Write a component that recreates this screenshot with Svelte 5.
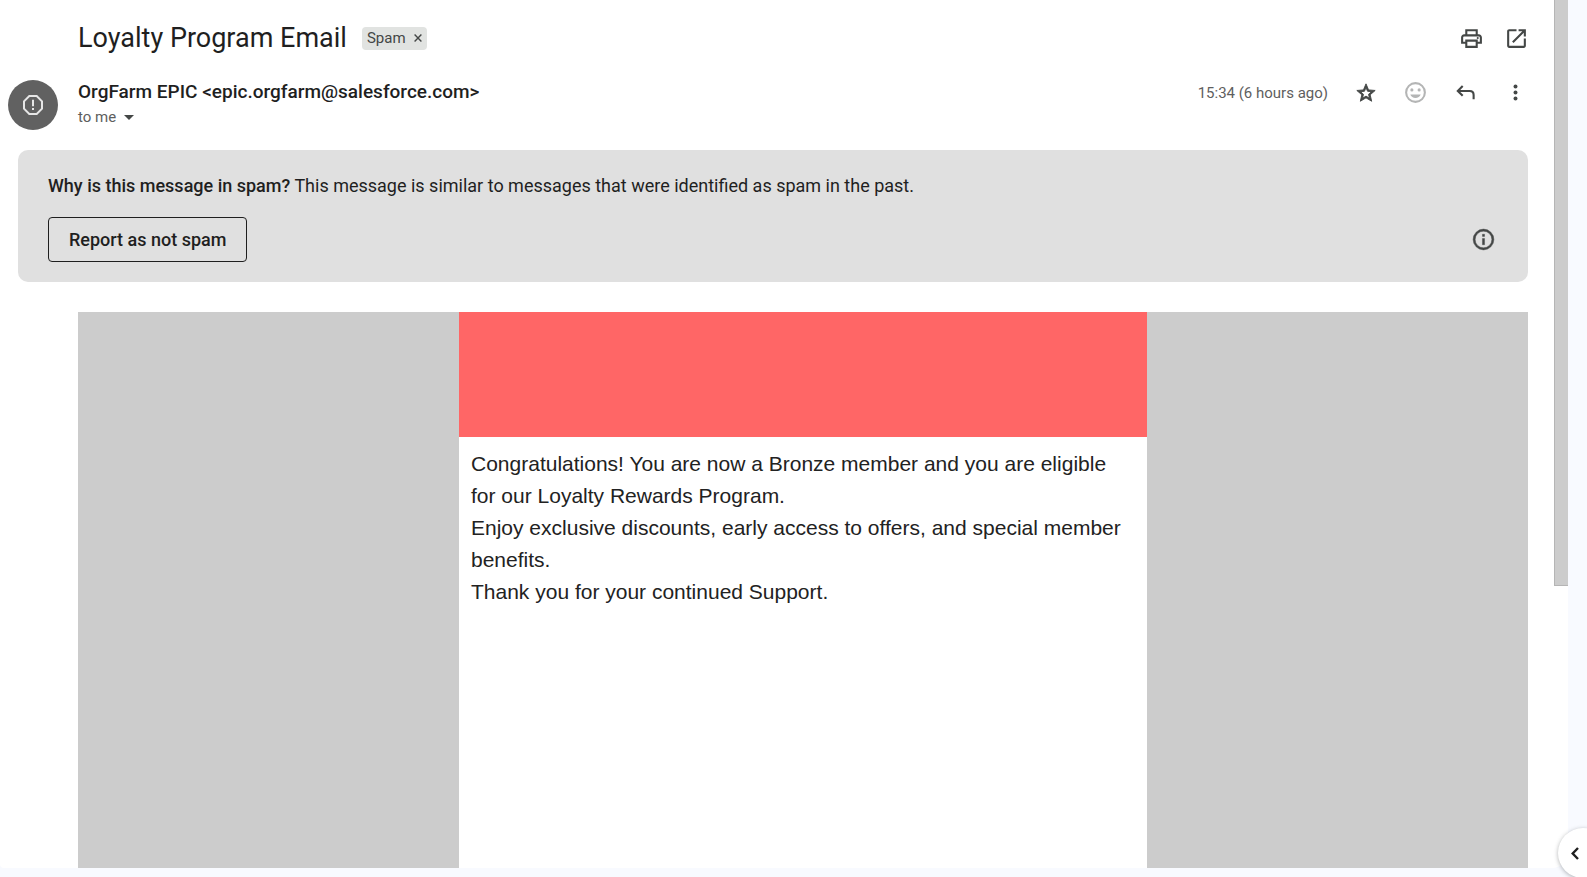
<script>
  const message = {
    subject: 'Loyalty Program Email',
    label: 'Spam',
    sender: 'OrgFarm EPIC',
    address: 'epic.orgfarm@salesforce.com',
    time: '15:34 (6 hours ago)',
    lines: [
      'Congratulations! You are now a Bronze member and you are eligible for our Loyalty Rewards Program.',
      'Enjoy exclusive discounts, early access to offers, and special member benefits.',
      'Thank you for your continued Support.'
    ]
  };
  let starred = $state(false);
  let labelled = $state(true);
</script>

<div class="page">
  <div class="sheet">
    <main class="thread">
      <header class="subject">
        <h1>{message.subject}</h1>
        {#if labelled}
          <span class="label">
            {message.label}
            <button aria-label="Remove label Spam" onclick={() => (labelled = false)}>
              <svg width="8" height="8" viewBox="0 0 8 8"><path d="M.6.6l6.800 6.800M7.400.6L.6 7.400" fill="none" stroke="#444746" stroke-width="1.4" /></svg>
            </button>
          </span>
        {/if}
        <div class="tools">
          <button class="icon" aria-label="Print all">
            <svg viewBox="0 0 24 24"><path d="M19 8h-1V3H6v5H5c-1.66 0-3 1.34-3 3v6h4v4h12v-4h4v-6c0-1.66-1.34-3-3-3zM8 5h8v3H8V5zm8 14H8v-4h8v4zm2-4v-2H6v2H4v-4c0-.55.45-1 1-1h14c.55 0 1 .45 1 1v4h-2z" /><circle cx="18" cy="11.5" r="1" /></svg>
          </button>
          <button class="icon" aria-label="In new window">
            <svg viewBox="0 0 24 24"><path d="M19 19H5V5h7V3H5c-1.11 0-2 .9-2 2v14c0 1.1.89 2 2 2h14c1.1 0 2-.9 2-2v-7h-2v7zM14 3v2h3.59l-9.83 9.83 1.41 1.41L19 6.41V10h2V3h-7z" /></svg>
          </button>
        </div>
      </header>

      <section class="sender">
        <div class="avatar">
          <svg width="20" height="20" viewBox="0 0 20 20"><path d="M6.3 1h7.4L19 6.3v7.4L13.7 19H6.3L1 13.7V6.3z" fill="none" stroke="#e6e6e6" stroke-width="2" /><path d="M9 4.8h2v6.4H9zM9 13h2v2H9z" fill="#e6e6e6" /></svg>
        </div>
        <div class="who">
          <h2>{message.sender} &lt;{message.address}&gt;</h2>
          <button class="to">to me
            <svg width="10" height="5" viewBox="0 0 10 5"><path d="M0 0h10L5 5z" fill="#444746" /></svg>
          </button>
        </div>
        <div class="actions">
          <time>{message.time}</time>
          <button class="icon star" aria-label="Star" aria-pressed={starred} onclick={() => (starred = !starred)}>
            <svg viewBox="0 0 24 24"><path d="M22 9.24l-7.19-.62L12 2 9.19 8.63 2 9.24l5.46 4.73L5.82 21 12 17.27 18.18 21l-1.63-7.03L22 9.24zM12 15.4l-3.76 2.27 1-4.28-3.32-2.88 4.38-.38L12 6.1l1.71 4.04 4.38.38-3.32 2.88 1 4.28L12 15.4z" /></svg>
          </button>
          <button class="icon faded" aria-label="Add reaction" disabled>
            <svg viewBox="0 0 24 24"><path d="M12 2a10 10 0 1 0 0 20 10 10 0 0 0 0-20zm0 18a8 8 0 1 1 0-16 8 8 0 0 1 0 16z" /><circle cx="8.5" cy="9.5" r="1.5" /><circle cx="15.5" cy="9.5" r="1.5" /><path d="M7 14h10c-.8 2-2.7 3.300-5 3.300S7.800 16 7 14z" /></svg>
          </button>
          <button class="icon" aria-label="Reply">
            <svg viewBox="0 0 24 24"><path d="M9.300 5.800L4.600 10.500L9.300 15.200M4.600 10.500H16C18.200 10.500 19.800 12.100 19.800 14.300V18.500" fill="none" stroke="#444746" stroke-width="2" /></svg>
          </button>
          <button class="icon" aria-label="More">
            <svg viewBox="0 0 24 24"><circle cx="12" cy="6.2" r="1.900" /><circle cx="12" cy="12" r="1.900" /><circle cx="12" cy="17.800" r="1.900" /></svg>
          </button>
        </div>
      </section>

      <section class="notice">
        <p><b>Why is this message in spam?</b> This message is similar to messages that were identified as spam in the past.</p>
        <div class="row">
          <button class="report">Report as not spam</button>
          <button class="icon info" aria-label="Learn more">
            <svg viewBox="0 0 24 24"><path d="M11 7h2v2h-2zm0 4h2v6h-2zm1-9a10 10 0 1 0 0 20 10 10 0 0 0 0-20zm0 18a8 8 0 1 1 0-16 8 8 0 0 1 0 16z" /></svg>
          </button>
        </div>
      </section>

      <article class="mail">
        <div class="letter">
          <div class="banner"></div>
          <div class="copy">
            {#each message.lines as line}
              <p>{line}</p>
            {/each}
          </div>
        </div>
      </article>
    </main>
    <div class="track"><div class="thumb"></div></div>
  </div>
  <button class="panel" aria-label="Show side panel">
    <svg width="8" height="13" viewBox="0 0 8 13"><path d="M7 1L1.700 6.500L7 12" fill="none" stroke="#1f1f1f" stroke-width="2.400" /></svg>
  </button>
</div>

<style>
  :global(body) {
    margin: 0;
    background: #f8faff;
  }
  .page {
    position: relative;
    box-sizing: border-box;
    height: 100vh;
    padding: 0 19px 9px 0;
    overflow: hidden;
    font-family: Roboto, sans-serif;
    color: #1f1f1f;
  }
  .sheet {
    display: flex;
    height: 100%;
    background: #fff;
    border-radius: 0 0 16px 4px;
    overflow: hidden;
  }
  .thread {
    flex: 1;
    min-width: 0;
    display: flex;
    flex-direction: column;
    padding-right: 26px;
  }
  h1, h2, p {
    margin: 0;
    font-weight: 400;
  }
  button {
    font-family: inherit;
    color: inherit;
    background: none;
    border: 0;
    padding: 0;
    cursor: pointer;
  }
  svg {
    display: block;
  }
  .icon {
    display: grid;
    place-items: center;
    width: 25px;
    height: 25px;
  }
  .icon svg {
    width: 25px;
    height: 25px;
    fill: #444746;
  }
  .icon.star svg {
    width: 22px;
    height: 22px;
    stroke: #444746;
    stroke-width: 1;
  }
  .icon.info svg {
    stroke: #444746;
    stroke-width: 0.4;
  }
  .icon.faded svg {
    fill: #b4b5b5;
  }
  .subject {
    display: flex;
    align-items: center;
    gap: 15px;
    height: 76px;
    padding-left: 78px;
  }
  h1 {
    font-size: 27px;
    line-height: 36px;
  }
  .label {
    display: flex;
    align-items: center;
    gap: 8px;
    height: 23px;
    padding: 0 5px;
    border-radius: 4px;
    background: #e1e3e1;
    color: #444746;
    font-size: 15px;
  }
  .tools {
    display: flex;
    gap: 20px;
    margin: 0 -1px 0 auto;
  }
  .sender {
    display: flex;
    height: 74px;
    padding-left: 8px;
  }
  .avatar {
    display: grid;
    place-items: center;
    width: 50px;
    height: 50px;
    margin: 4px 20px 0 0;
    border-radius: 50%;
    background: #616161;
  }
  h2 {
    padding-top: 4px;
    font-size: 19px;
    font-weight: 500;
    line-height: 24px;
  }
  .to {
    display: flex;
    align-items: center;
    gap: 8px;
    height: 26px;
    font-size: 15px;
    color: #5e5e5e;
  }
  .actions {
    display: flex;
    align-items: center;
    gap: 25px;
    height: 33px;
    margin-left: auto;
  }
  time {
    font-size: 15px;
    color: #5e5e5e;
  }
  .notice {
    margin-left: 18px;
    padding: 24px 30px 20px;
    border-radius: 10px;
    background: #e0e0e0;
  }
  .notice p {
    font-size: 18px;
    line-height: 24px;
  }
  .notice b {
    font-weight: 500;
  }
  .row {
    display: flex;
    align-items: center;
    justify-content: space-between;
    margin-top: 19px;
    padding-right: 2px;
  }
  .report {
    height: 45px;
    padding: 0 20px;
    border: 1px solid #1f1f1f;
    border-radius: 4px;
    font-size: 18px;
    font-weight: 500;
  }
  .mail {
    flex: 1;
    display: flex;
    justify-content: center;
    margin: 30px 0 0 78px;
    background: #ccc;
  }
  .letter {
    width: 688px;
    background: #fff;
  }
  .banner {
    height: 125px;
    background: #f66;
  }
  .copy {
    padding: 11px 12px;
    font-family: "Liberation Sans", Arial, sans-serif;
    font-size: 21px;
    line-height: 32px;
    color: #222;
  }
  .track {
    width: 14px;
  }
  .thumb {
    box-sizing: border-box;
    height: 67.5%;
    background: #ccc;
    border: solid #b5b5b5;
    border-width: 0 0 1px 1px;
  }
  .panel {
    position: absolute;
    right: -21px;
    bottom: -1px;
    width: 50px;
    height: 50px;
    padding-left: 13px;
    border-radius: 50%;
    background: #fff;
    box-shadow: 0 1px 4px rgba(60, 64, 67, 0.4);
  }
</style>
